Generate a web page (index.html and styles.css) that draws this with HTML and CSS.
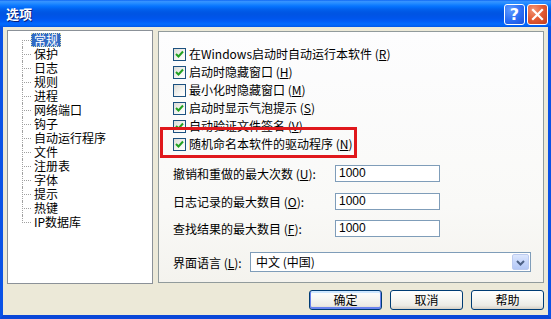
FILE: index.html
```html
<!DOCTYPE html>
<html lang="zh-CN">
<head>
<meta charset="utf-8">
<title>选项</title>
<link rel="stylesheet" href="styles.css">
</head>
<body>
<div class="window">
  <div class="titlebar">
    <span class="title">选项</span>
    <div class="tb-buttons">
      <span class="tb-btn tb-help">?</span>
      <span class="tb-btn tb-close">
        <svg width="21" height="21" viewBox="0 0 21 21"><path d="M6 6 L15 15 M15 6 L6 15" stroke="#fff" stroke-width="2.2" stroke-linecap="square"/></svg>
      </span>
    </div>
  </div>
  <div class="body">
    <div class="main">
      <div class="tree">
        <ul class="tree-list">
          <li><span class="node selected">常规</span></li>
          <li><span class="node">保护</span></li>
          <li><span class="node">日志</span></li>
          <li><span class="node">规则</span></li>
          <li><span class="node">进程</span></li>
          <li><span class="node">网络端口</span></li>
          <li><span class="node">钩子</span></li>
          <li><span class="node">自动运行程序</span></li>
          <li><span class="node">文件</span></li>
          <li><span class="node">注册表</span></li>
          <li><span class="node">字体</span></li>
          <li><span class="node">提示</span></li>
          <li><span class="node">热键</span></li>
          <li><span class="node">IP数据库</span></li>
        </ul>
      </div>
      <div class="panel">
        <div class="checks">
          <div class="check-row"><span class="cb on"><svg width="11" height="11" viewBox="0 0 11 11"><path d="M2 5 L4.5 7.5 L9 2.5" fill="none" stroke="#21a121" stroke-width="2"/></svg></span><span class="cb-label">在Windows启动时自动运行本软件 (<u>R</u>)</span></div>
          <div class="check-row"><span class="cb on"><svg width="11" height="11" viewBox="0 0 11 11"><path d="M2 5 L4.5 7.5 L9 2.5" fill="none" stroke="#21a121" stroke-width="2"/></svg></span><span class="cb-label">启动时隐藏窗口 (<u>H</u>)</span></div>
          <div class="check-row"><span class="cb"></span><span class="cb-label">最小化时隐藏窗口 (<u>M</u>)</span></div>
          <div class="check-row"><span class="cb on"><svg width="11" height="11" viewBox="0 0 11 11"><path d="M2 5 L4.5 7.5 L9 2.5" fill="none" stroke="#21a121" stroke-width="2"/></svg></span><span class="cb-label">启动时显示气泡提示 (<u>S</u>)</span></div>
          <div class="check-row"><span class="cb on"><svg width="11" height="11" viewBox="0 0 11 11"><path d="M2 5 L4.5 7.5 L9 2.5" fill="none" stroke="#21a121" stroke-width="2"/></svg></span><span class="cb-label">自动验证文件签名 (<u>V</u>)</span></div>
          <div class="check-row"><span class="cb on"><svg width="11" height="11" viewBox="0 0 11 11"><path d="M2 5 L4.5 7.5 L9 2.5" fill="none" stroke="#21a121" stroke-width="2"/></svg></span><span class="cb-label">随机命名本软件的驱动程序 (<u>N</u>)</span></div>
        </div>
        <div class="fields">
          <div class="field-row"><span class="field-label">撤销和重做的最大次数 (<u>U</u>):</span><span class="input">1000</span></div>
          <div class="field-row"><span class="field-label">日志记录的最大数目 (<u>O</u>):</span><span class="input">1000</span></div>
          <div class="field-row"><span class="field-label">查找结果的最大数目 (<u>F</u>):</span><span class="input">1000</span></div>
        </div>
        <div class="lang-row">
          <span class="lang-label">界面语言 (<u>L</u>):</span>
          <span class="combo">
            <span class="combo-text">中文 (中国)</span>
            <span class="combo-btn"><svg width="15" height="15" viewBox="0 0 15 15"><path d="M4 6 L7.5 9.5 L11 6" fill="none" stroke="#4d6185" stroke-width="2"/></svg></span>
          </span>
        </div>
        <div class="mark"></div>
      </div>
    </div>
    <div class="buttons">
      <span class="btn default">确定</span>
      <span class="btn">取消</span>
      <span class="btn">帮助</span>
    </div>
  </div>
</div>
</body>
</html>
```

FILE: styles.css
```css
* { box-sizing: border-box; }
html, body { margin: 0; padding: 0; }
body {
  width: 551px;
  height: 319px;
  overflow: hidden;
  font-family: "Noto Sans CJK SC", "Noto Sans", sans-serif;
  font-size: 12px;
  color: #000;
  background: #ece9d8;
}
u { text-decoration: underline; text-underline-offset: 1px; }

.window {
  width: 551px;
  height: 319px;
  display: flex;
  flex-direction: column;
}

.titlebar {
  height: 27px;
  flex: none;
  display: flex;
  align-items: flex-start;
  justify-content: space-between;
  background: linear-gradient(to bottom, #0058ee 0px, #3a93ff 1px, #288eff 3px, #127dff 5px, #036ffc 7px, #0262ee 9px, #0057e5 12px, #0054e3 14px, #0055eb 18px, #005bf5 21px, #026afe 24px, #0160f2 26px, #0055e5 27px);
}
.title {
  color: #fff;
  font-weight: bold;
  font-size: 13px;
  line-height: 17px;
  margin: 5px 0 0 6px;
  text-shadow: 1px 1px 0 #0a1f76;
}
.tb-buttons {
  display: flex;
  gap: 2px;
  margin: 4px 3px 0 0;
}
.tb-btn {
  width: 21px;
  height: 21px;
  border: 1px solid #fff;
  border-radius: 3px;
  display: flex;
  align-items: center;
  justify-content: center;
  overflow: hidden;
}
.tb-help {
  background: radial-gradient(circle at 30% 25%, #5f9bff 0%, #2a6df5 55%, #1b4fd8 100%);
  color: #fff;
  font-family: "DejaVu Sans", sans-serif;
  font-weight: bold;
  font-size: 16px;
  line-height: 19px;
}
.tb-close {
  background: radial-gradient(circle at 30% 25%, #f19576 0%, #e35a32 50%, #c13d1f 100%);
}
.tb-close svg { margin: -1px; }

.body {
  flex: 1;
  background: #ece9d8;
  border-left: 3px solid #0a52e6;
  border-right: 3px solid #0a52e6;
  border-bottom: 4px solid #0a47d8;
  display: flex;
  flex-direction: column;
}

.main {
  display: flex;
  gap: 5px;
  padding: 3px 4px 0 4px;
}

.tree {
  width: 146px;
  height: 254px;
  background: #fff;
  border: 1px solid #8b9198;
  padding: 2px 0 0 14px;
}
.tree-list {
  list-style: none;
  margin: 0;
  padding: 0;
}
.tree-list li {
  position: relative;
  height: 14px;
  padding-left: 9px;
  display: flex;
  align-items: center;
}
.tree-list li::before {
  content: "";
  position: absolute;
  left: 0;
  top: 7px;
  width: 9px;
  border-top: 1px dotted #a0a0a0;
}
.tree-list li::after {
  content: "";
  position: absolute;
  left: 0;
  top: 0;
  height: 14px;
  border-left: 1px dotted #a0a0a0;
}
.tree-list li:first-child::after { top: 7px; height: 7px; }
.tree-list li:last-child::after { height: 8px; }
.node {
  line-height: 12px;
  padding: 0 2px;
  border: 1px solid transparent;
  white-space: nowrap;
}
.node.selected {
  background: #316ac5;
  color: #fff;
  border: 1px dotted #d8dcb0;
}

.panel {
  position: relative;
  width: 386px;
  height: 252px;
  margin-top: 1px;
  border: 1px solid #919b9c;
  background: linear-gradient(to bottom, #fdfdfe 0%, #f9f9f7 70%, #f4f3ee 100%);
  padding: 13px 0 0 14px;
}

.check-row {
  height: 18px;
  display: flex;
  align-items: center;
}
.cb {
  width: 13px;
  height: 13px;
  flex: none;
  border: 1px solid #1c5180;
  background: linear-gradient(135deg, #dcdcd7 0%, #f5f5f3 60%, #ffffff 100%);
  display: flex;
  align-items: center;
  justify-content: center;
}
.cb-label {
  margin-left: 3px;
  white-space: nowrap;
  line-height: 14px;
}

.fields {
  margin-top: 12px;
  display: flex;
  flex-direction: column;
  gap: 10.5px;
}
.field-row {
  height: 17px;
  display: flex;
  align-items: center;
}
.field-label {
  width: 162px;
  flex: none;
  white-space: nowrap;
}
.input {
  width: 105px;
  height: 17px;
  border: 1px solid #7f9db9;
  background: #fff;
  font-family: "Liberation Sans", Arial, sans-serif;
  font-size: 12px;
  line-height: 15px;
  padding-left: 3px;
}

.lang-row {
  margin-top: 15px;
  display: flex;
  align-items: center;
  height: 20px;
}
.lang-label {
  width: 77px;
  flex: none;
  white-space: nowrap;
}
.combo {
  width: 281px;
  height: 20px;
  border: 1px solid #7f9db9;
  background: #fff;
  display: flex;
  align-items: center;
  justify-content: space-between;
  padding: 0 1px 0 5px;
}
.combo-text { line-height: 16px; white-space: nowrap; }
.combo-btn {
  width: 17px;
  height: 16px;
  border: 1px solid #bccbf0;
  border-radius: 2px;
  background: linear-gradient(to bottom, #dde7fd 0%, #c6d6fb 50%, #b4c8f6 100%);
  display: flex;
  align-items: center;
  justify-content: center;
}

.mark {
  position: absolute;
  left: 1px;
  top: 95px;
  width: 197px;
  height: 31px;
  border: 3px solid #e0181c;
}

.buttons {
  margin-top: 6px;
  padding-right: 4px;
  display: flex;
  justify-content: flex-end;
  gap: 8px;
}
.btn {
  width: 73px;
  height: 20px;
  border: 1px solid #003c74;
  border-radius: 3px;
  background: linear-gradient(to bottom, #ffffff 0%, #f7f7f4 40%, #ecebe5 80%, #d6d0c5 100%);
  display: flex;
  align-items: center;
  justify-content: center;
  line-height: 14px;
}
.btn.default {
  box-shadow: inset 0 -1px 0 1px #6982ee, inset 0 1px 0 1px #cee7ff;
}
```
